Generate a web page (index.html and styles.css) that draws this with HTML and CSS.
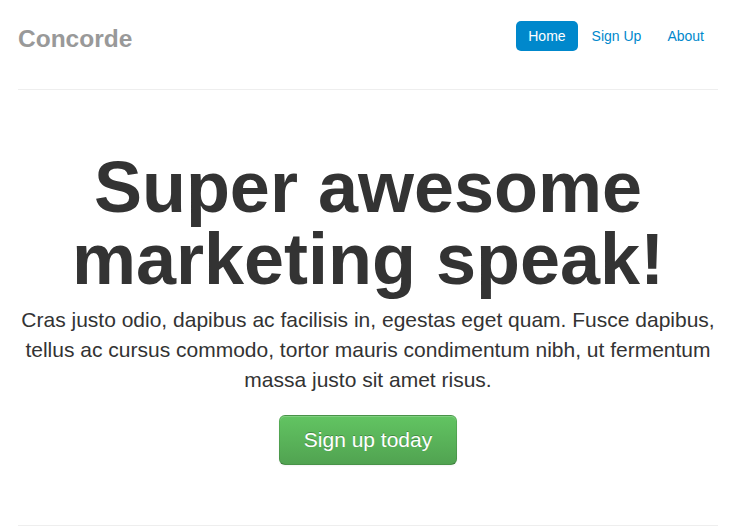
FILE: index.html
```html
<!DOCTYPE html>
<html lang="en">
<head>
<meta charset="utf-8">
<title>Concorde</title>
<link rel="stylesheet" href="styles.css">
</head>
<body>
<div class="container">
  <header class="masthead">
    <h3 class="brand">Concorde</h3>
    <ul class="nav">
      <li><a class="nav-link active" href="#">Home</a></li>
      <li><a class="nav-link" href="#">Sign Up</a></li>
      <li><a class="nav-link" href="#">About</a></li>
    </ul>
  </header>
  <hr class="rule">
  <main class="jumbotron">
    <h1 class="headline">Super awesome marketing speak!</h1>
    <p class="lead">Cras justo odio, dapibus ac facilisis in, egestas eget quam. Fusce dapibus, tellus ac cursus commodo, tortor mauris condimentum nibh, ut fermentum massa justo sit amet risus.</p>
    <a class="btn-success" href="#">Sign up today</a>
  </main>
  <hr class="rule rule-bottom">
</div>
</body>
</html>
```
FILE: styles.css
```css
html, body {
  margin: 0;
  padding: 0;
  background: #fff;
}
body {
  font-family: "Liberation Sans", Arial, Helvetica, sans-serif;
  font-size: 14px;
  line-height: 20px;
  color: #333;
}
.container {
  width: 700px;
  margin: 0 0 0 18px;
  padding-top: 19px;
}
.masthead {
  display: flex;
  justify-content: space-between;
  align-items: flex-start;
  height: 40px;
}
.brand {
  margin: 0;
  font-size: 24.5px;
  line-height: 40px;
  font-weight: bold;
  color: #999;
}
.nav {
  display: flex;
  list-style: none;
  margin: 0;
  padding: 0;
}
.nav-link {
  display: block;
  margin: 2px 2px 0 0;
  padding: 8px 12px;
  line-height: 14px;
  font-size: 14px;
  color: #0088cc;
  text-decoration: none;
  border-radius: 5px;
}
.nav-link.active {
  background: #0088cc;
  color: #fff;
}
.rule {
  margin: 30px 0 0;
  border: 0;
  border-top: 1px solid #eee;
  border-bottom: 1px solid #fff;
  height: 0;
}
.rule-bottom {
  margin-top: 0;
}
.jumbotron {
  padding: 60px 0;
  text-align: center;
}
.headline {
  margin: 0 0 10px;
  font-size: 72px;
  line-height: 1;
  font-weight: bold;
  color: #333;
}
.lead {
  margin: 0 0 20px;
  font-size: 21px;
  line-height: 30px;
  font-weight: 200;
}
.btn-success {
  display: inline-block;
  vertical-align: top;
  padding: 14px 24px;
  font-size: 21px;
  line-height: 20px;
  color: #fff;
  text-decoration: none;
  text-shadow: 0 -1px 0 rgba(0, 0, 0, 0.25);
  background-color: #5bb75b;
  background-image: linear-gradient(to bottom, #62c462, #51a351);
  border: 1px solid;
  border-color: rgba(0, 0, 0, 0.1) rgba(0, 0, 0, 0.1) rgba(0, 0, 0, 0.25);
  border-radius: 6px;
  box-shadow: inset 0 1px 0 rgba(255, 255, 255, 0.2), 0 1px 2px rgba(0, 0, 0, 0.05);
}
```
